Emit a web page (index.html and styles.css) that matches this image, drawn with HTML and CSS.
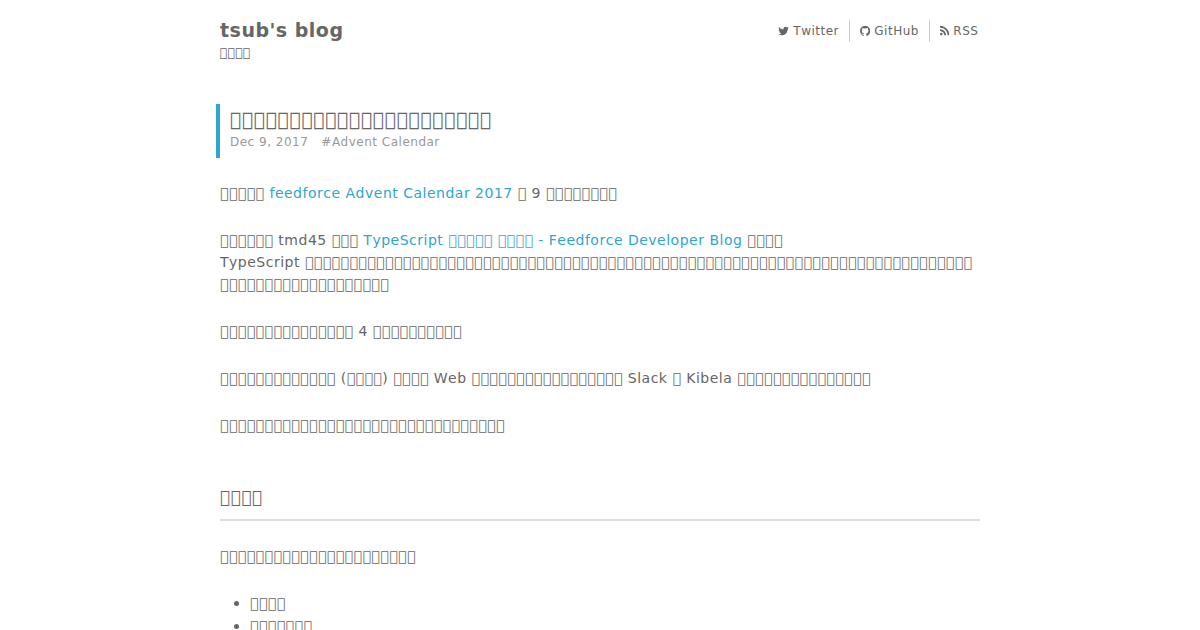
FILE: index.html
```html
<!DOCTYPE html>
<html lang="ja">
<head>
  <meta charset="UTF-8">
  <meta name="viewport" content="width=device-width, initial-scale=1.0">
  <title>tsub's blog</title>
  <link rel="stylesheet" href="styles.css">
</head>
<body>

  <div class="container">
    <header class="header">
      <div class="brand">
        <h1 class="site-title">tsub's blog</h1>
        <p class="site-desc"><span data-n="4"></span></p>
      </div>
      <nav class="nav">
        <a href="#"><svg class="icon" viewBox="0 0 1664 1792"><path d="M1620 408q-67 98-162 167 1 14 1 42 0 130-38 259.500t-115.500 248.500-184.500 210.500-258 146-323 54.500q-271 0-496-145 35 4 78 4 225 0 401-138-105-2-188-64.500t-114-159.500q33 5 61 5 43 0 85-11-112-23-185.500-111.500t-73.500-205.500v-4q68 38 146 41-66-44-105-115t-39-154q0-88 44-163 121 149 294.500 238.500t371.500 99.500q-8-38-8-74 0-134 94.500-228.500t228.500-94.500q140 0 236 102 109-21 205-78-37 115-142 178 93-10 186-50z"/></svg>Twitter</a>
        <a href="#"><svg class="icon" viewBox="0 0 1536 1792"><path d="M768 128q209 0 385.500 103t279.500 279.500 103 385.500q0 251-146.500 451.500t-378.500 277.500q-27 5-40-7t-13-30q0-3 .5-76.500t.5-134.500q0-97-52-142 57-6 102.500-18t94-39 81-66.500 53-105 20.500-150.500q0-119-79-206 37-91-8-204-28-9-81 11t-92 44l-38 24q-93-26-192-26t-192 26q-16-11-42.500-27t-83.500-38.500-85-13.500q-45 113-8 204-79 87-79 206 0 85 20.500 150t52.500 105 80.500 67 94 39 102.500 18q-39 36-49 103-21 10-45 15t-57 5-65.500-21.500-55.500-62.500q-19-32-48.500-52t-49.500-24l-20-3q-21 0-29 4.500t-5 11.500 9 14 13 12l7 5q22 10 43.500 38t31.500 51l10 23q13 38 44 61.500t67 30 69.500 7 55.500-3.500l23-4q0 38 .5 88.500t.5 54.500q0 18-13 30t-40 7q-232-77-378.500-277.500t-146.500-451.500q0-209 103-385.500t279.500-279.500 385.500-103z"/></svg>GitHub</a>
        <a href="#"><svg class="icon" viewBox="0 0 1408 1792"><path d="M384 1344q0 80-56 136t-136 56-136-56-56-136 56-136 136-56 136 56 56 136zm512 123q2 28-17 48-18 21-47 21h-135q-25 0-43-16.500t-20-41.500q-22-229-184.500-391.500t-391.500-184.500q-25-2-41.500-20t-16.500-43v-135q0-29 21-47 17-17 43-17h5q160 13 306 80.500t259 181.500q114 113 181.500 259t80.500 306zm512 2q2 27-18 47-18 20-46 20h-143q-26 0-44.500-17.500t-19.500-42.500q-12-215-101-408.500t-231.500-336-336-231.500-408.500-102q-25-1-42.500-19.500t-17.500-43.500v-143q0-28 20-46 18-18 44-18h3q262 13 501.500 120t425.500 294q187 186 294 425.500t120 501.500z"/></svg>RSS</a>
      </nav>
    </header>

    <article class="post">
      <div class="post-header">
        <h2 class="post-title"><span data-n="22"></span></h2>
        <div class="post-meta"><time>Dec 9, 2017</time><span class="tag">#Advent Calendar</span></div>
      </div>

      <div class="post-content">
        <p><span data-n="5"></span> <a href="#">feedforce Advent Calendar 2017</a> <span data-n="1"></span> 9 <span data-n="8"></span></p>
        <p><span data-n="6"></span> tmd45 <span data-n="3"></span> <a href="#">TypeScript <span data-n="5"></span> <span data-n="4"></span> - Feedforce Developer Blog</a> <span data-n="4"></span><br>
        TypeScript <span data-n="94"></span></p>
        <p><span data-n="15"></span> 4 <span data-n="10"></span></p>
        <p><span data-n="13"></span> (<span data-n="4"></span>) <span data-n="4"></span> Web <span data-n="17"></span> Slack <span data-n="1"></span> Kibela <span data-n="15"></span></p>
        <p><span data-n="32"></span></p>
        <h3><span data-n="4"></span></h3>
        <p><span data-n="22"></span></p>
        <ul>
          <li><span data-n="4"></span></li>
          <li><span data-n="7"></span></li>
        </ul>
      </div>
    </article>
  </div>

  <script>
    // fill each run with n ideographs
    document.querySelectorAll('[data-n]').forEach(function(el) {
      el.textContent = '\u{3F000}'.repeat(Number(el.dataset.n));
    });
  </script>
</body>
</html>
```
FILE: styles.css
```css
* {
  box-sizing: border-box;
}

body {
  margin: 0;
  height: 630px;
  overflow: hidden;
  font-family: "DejaVu Sans", sans-serif;
  font-size: 14px;
  font-kerning: none;
  line-height: 1.6;
  letter-spacing: 0.5px;
  color: #666;
  background: #fff;
}

a {
  color: #2fa5d0;
  text-decoration: none;
}

h1, h2, h3, p {
  margin: 0;
}

.container {
  width: 760px;
  margin: 0 auto;
}

.header {
  display: flex;
  justify-content: space-between;
  align-items: flex-start;
  padding-top: 20px;
}

.site-title {
  font-size: 19px;
  line-height: 20px;
}

.site-desc {
  padding-top: 2px;
  font-size: 12px;
  line-height: 22px;
}

.nav {
  display: flex;
  font-size: 12px;
  line-height: 22px;
}

.nav a {
  display: flex;
  align-items: center;
  padding: 0 10px;
  color: #666;
  border-right: 1px solid #ccc;
}

.nav a:last-child {
  padding-right: 1.6px;
  border-right: 0;
}

.icon {
  height: 12px;
  margin-right: 4px;
  fill: currentColor;
}

.post {
  margin-top: 40px;
}

.post-header {
  margin-left: -4px;
  padding: 5px 0 5px 10px;
  height: 54px;
  border-left: 4px solid #2fa5d0;
}

.post-title {
  margin-bottom: 2px;
  font-size: 19px;
  font-weight: normal;
  line-height: 20px;
}

.post-meta {
  font-size: 12px;
  line-height: 22px;
  color: #999;
}

.tag {
  margin-left: 13px;
}

.post-content {
  padding-top: 23.8px;
}

.post-content p {
  margin-bottom: 24.5px;
}

.post-content h3 {
  margin: 47.2px 0 24.5px;
  padding-bottom: 8px;
  font-size: 17px;
  font-weight: normal;
  border-bottom: 2px solid #ddd;
}

.post-content ul {
  margin: 0;
  padding-left: 30px;
  list-style: none;
}

.post-content li {
  position: relative;
}

.post-content li::before {
  content: "";
  position: absolute;
  left: -16px;
  top: 9px;
  width: 5px;
  height: 5px;
  border-radius: 50%;
  background: #666;
}
```
